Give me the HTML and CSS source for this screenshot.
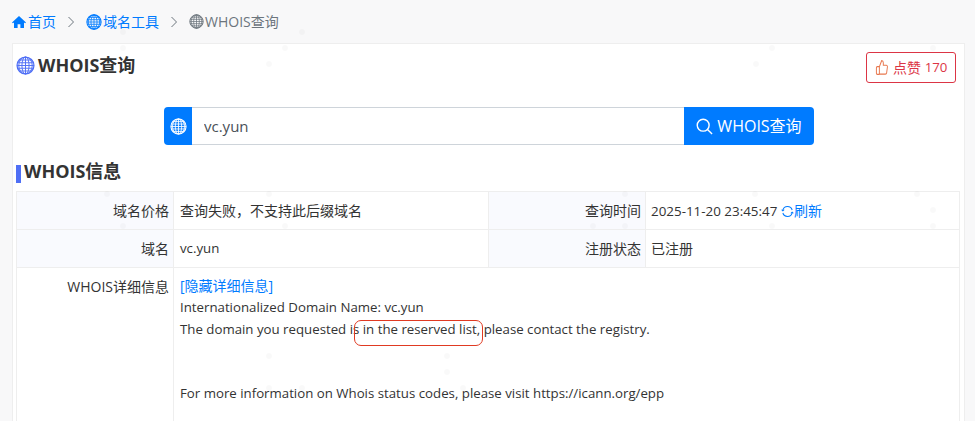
FILE: index.html
```html
<!DOCTYPE html>
<html lang="zh-CN">
  <head>
    <meta charset="UTF-8" />
    <title>WHOIS查询</title>
    <link rel="stylesheet" href="styles.css">
  </head>
  <body>
    <svg width="0" height="0" class="defs">
      <defs>
        <symbol id="globe" viewBox="0 0 18 18">
          <g fill="none" stroke="currentColor" stroke-width="0.9">
            <circle cx="9" cy="9" r="8" stroke-width="1.2" />
            <ellipse cx="9" cy="9" rx="3.4" ry="8" />
            <ellipse cx="9" cy="9" rx="6.4" ry="8" />
            <path d="M9 1v16M3 3.8h12M1.5 6.4h15M1 9h16M1.5 11.6h15M3 14.2h12" />
          </g>
        </symbol>
      </defs>
    </svg>

    <nav class="crumbs">
      <a href="#" class="crumb">
        <svg class="crumb-icon" viewBox="0 0 14 14"><path fill="currentColor" d="M7 1 0 7.4l.9.9L2 7.4V13h3.6V9.2h2.8V13H12V7.4l1.1.9.9-.9z" /></svg>首页
      </a>
      <svg class="sep" viewBox="0 0 8 12"><path d="M1.5 1l5 5-5 5" /></svg>
      <a href="#" class="crumb">
        <svg class="crumb-icon globe-sm"><use href="#globe" /></svg>域名工具
      </a>
      <svg class="sep" viewBox="0 0 8 12"><path d="M1.5 1l5 5-5 5" /></svg>
      <span class="crumb current">
        <svg class="crumb-icon globe-sm"><use href="#globe" /></svg>WHOIS查询
      </span>
    </nav>

    <main class="card">
      <div class="card-head">
        <h1 class="title"><svg class="title-icon"><use href="#globe" /></svg>WHOIS查询</h1>
        <button class="like">
          <svg class="like-icon" viewBox="0 0 16 16" preserveAspectRatio="none"><path d="M5 7.2 7.6 1.6c1.2 0 1.9.8 1.9 1.9v2.4h3.4c.9 0 1.4.7 1.3 1.5l-.9 5.6c-.1.7-.7 1.2-1.4 1.2H5zM5 7.2H2.6c-.6 0-1 .4-1 1v5.3c0 .6.4 1 1 1H5" /></svg>点赞&nbsp;<span class="latin">170</span>
        </button>
      </div>

      <form class="search">
        <span class="search-addon"><svg class="addon-icon"><use href="#globe" /></svg></span>
        <input class="search-input" type="text" value="vc.yun" />
        <button class="search-btn" type="button">
          <svg class="search-icon" viewBox="0 0 18 18"><circle cx="7.6" cy="7.6" r="6.3" /><path d="M12.2 12.2 17 17" /></svg>WHOIS查询
        </button>
      </form>

      <h2 class="section">WHOIS信息</h2>

      <table class="info">
        <colgroup>
          <col class="col-label" />
          <col class="col-value" />
          <col class="col-label" />
          <col />
        </colgroup>
        <tr>
          <th>域名价格</th>
          <td>查询失败，不支持此后缀域名</td>
          <th>查询时间</th>
          <td><span class="date">2025-11-20 23:45:47</span> <a href="#" class="refresh"><svg class="refresh-icon" viewBox="0 0 14 14"><path d="M2 5.6A5.2 5.2 0 0 1 12 5.4M12 8.4A5.2 5.2 0 0 1 2 8.6" /><path class="arrow" d="M0 5l2 2 2-2zM10 9l2-2 2 2z" /></svg>刷新</a></td>
        </tr>
        <tr>
          <th>域名</th>
          <td class="latin">vc.yun</td>
          <th>注册状态</th>
          <td>已注册</td>
        </tr>
        <tr class="detail">
          <th>WHOIS详细信息</th>
          <td colspan="3">
            <a href="#" class="toggle">[隐藏详细信息]</a>
            <span class="latin">Internationalized Domain Name: vc.yun</span><br />
            <span class="latin">The domain you requested is in the reserved list, please contact the registry.</span><br />
            <br />
            <br />
            <span class="latin">For more information on Whois status codes, please visit https://icann.org/epp</span>
          </td>
        </tr>
      </table>
    </main>

    <!-- red marker drawn over the screenshot -->
    <div class="marker"></div>

    <!-- faint dots of the page background -->
    <svg class="dots" width="975" height="421" viewBox="0 0 975 421">
      <g fill="#000" fill-opacity="0.025">
        <circle cx="123" cy="32" r="3" /><circle cx="302" cy="32" r="3" />
        <circle cx="123" cy="48" r="3" /><circle cx="285" cy="48" r="3" />
        <circle cx="269" cy="64" r="3" /><circle cx="772" cy="48" r="3" />
        <circle cx="933" cy="48" r="3" /><circle cx="756" cy="64" r="3" />
        <circle cx="107" cy="194" r="3" /><circle cx="269" cy="194" r="3" />
        <circle cx="123" cy="226" r="3" /><circle cx="285" cy="226" r="3" />
        <circle cx="625" cy="194" r="3" /><circle cx="755" cy="194" r="3" />
        <circle cx="917" cy="194" r="3" /><circle cx="933" cy="210" r="3" />
        <circle cx="593" cy="226" r="3" /><circle cx="625" cy="226" r="3" />
        <circle cx="772" cy="226" r="3" /><circle cx="933" cy="226" r="3" />
        <circle cx="269" cy="356" r="3" /><circle cx="447" cy="356" r="3" />
        <circle cx="447" cy="372" r="3" /><circle cx="269" cy="388" r="3" />
        <circle cx="302" cy="388" r="3" /><circle cx="463" cy="388" r="3" />
      </g>
    </svg>
  </body>
</html>
```

FILE: styles.css
```css
html,
body {
  margin: 0;
  padding: 0;
  height: 421px;
  overflow: hidden;
}

body {
  position: relative;
  background: #f8f8f9;
  color: #333;
  font-family: "Open Sans", "Noto Sans CJK SC", sans-serif;
  font-size: 14px;
  line-height: 21px;
}

a {
  color: #007bff;
  text-decoration: none;
}

.latin {
  font-size: 13.25px;
}

.date {
  font-size: 13.4px;
}

.defs {
  position: absolute;
}

.crumbs {
  display: flex;
  align-items: center;
  height: 43px;
  padding-left: 12px;
}

.crumb {
  display: flex;
  align-items: center;
}

.crumb.current {
  color: #6c757d;
}

.crumb-icon {
  width: 14px;
  height: 14px;
  margin-right: 2px;
  color: #007bff;
}

.globe-sm {
  width: 16px;
  height: 16px;
  margin-right: 1px;
}

.current .crumb-icon {
  width: 15px;
  height: 15px;
  color: #6c757d;
}

.sep {
  width: 8px;
  height: 12px;
  margin: 0 11px;
  fill: none;
  stroke: #6c757d;
  stroke-width: 1;
}

.card {
  width: 953px;
  height: 378px;
  margin-left: 12px;
  padding: 0 3px;
  box-sizing: border-box;
  background: #fff;
  border: 1px solid #eee;
  border-bottom: 0;
  overflow: hidden;
}

.card-head {
  display: flex;
  justify-content: space-between;
  padding: 8px 5px 0 0;
}

.title {
  display: flex;
  align-items: center;
  margin: 0;
  height: 26px;
  font-size: 18px;
  font-weight: 700;
  color: #333;
}

.title-icon {
  width: 19px;
  height: 19px;
  margin-right: 3px;
  color: #4f6ff5;
}

.like {
  display: flex;
  align-items: center;
  box-sizing: border-box;
  width: 90px;
  height: 31px;
  padding: 0 0 0 8px;
  background: #fff;
  border: 1px solid #dc3545;
  border-radius: 3px;
  color: #dc3545;
  font: inherit;
}

.like-icon {
  width: 14px;
  height: 17px;
  margin-right: 4px;
  fill: none;
  stroke: #e8784f;
  stroke-width: 1.1;
}

.search {
  display: flex;
  width: 650px;
  height: 38px;
  margin: 24px 0 0 148px;
}

.search-addon {
  display: flex;
  align-items: center;
  justify-content: center;
  width: 28px;
  background: #007bff;
  border-radius: 4px 0 0 4px;
}

.addon-icon {
  width: 17px;
  height: 17px;
  color: #fff;
}

.search-input {
  flex: 1;
  min-width: 0;
  padding: 0 12px;
  border: 1px solid #ced4da;
  border-left: 0;
  border-right: 0;
  color: #495057;
  font: inherit;
  font-size: 15px;
  outline: none;
}

.search-btn {
  display: flex;
  align-items: center;
  justify-content: center;
  width: 130px;
  padding: 0;
  background: #007bff;
  border: 0;
  border-radius: 0 4px 4px 0;
  color: #fff;
  font: inherit;
  font-size: 16px;
}

.search-icon {
  width: 17px;
  height: 17px;
  margin-right: 4px;
  fill: none;
  stroke: #fff;
  stroke-width: 1.5;
}

.section {
  margin: 20px 0 8px;
  height: 18px;
  padding-left: 3px;
  border-left: 5px solid #4f6ff5;
  font-size: 18px;
  line-height: 12px;
  font-weight: 700;
  color: #333;
}

.info {
  width: 944px;
  table-layout: fixed;
  border-collapse: collapse;
}

.col-label {
  width: 157px;
}

.col-value {
  width: 315px;
}

.info th,
.info td {
  height: 38px;
  padding: 0 5px;
  border: 1px solid #eee;
  box-sizing: border-box;
}

.info td:nth-child(2) {
  padding-left: 6px;
}

.info th {
  padding-right: 4px;
  background: #f9fafe;
  font-weight: 400;
  text-align: right;
}

.info .detail th,
.info .detail td {
  height: 240px;
  background: #fff;
  vertical-align: top;
  padding-top: 8px;
}

.toggle {
  display: block;
  line-height: 20px;
}

.refresh-icon {
  width: 13px;
  height: 13px;
  vertical-align: -2px;
  fill: none;
  stroke: #007bff;
  stroke-width: 1.1;
}

.refresh-icon .arrow {
  fill: #007bff;
  stroke: none;
}

.marker {
  position: absolute;
  left: 354px;
  top: 320px;
  width: 129px;
  height: 26px;
  box-sizing: border-box;
  border: 1px solid #e03a22;
  border-radius: 7px;
}

.dots {
  position: absolute;
  left: 0;
  top: 0;
  pointer-events: none;
}
```
